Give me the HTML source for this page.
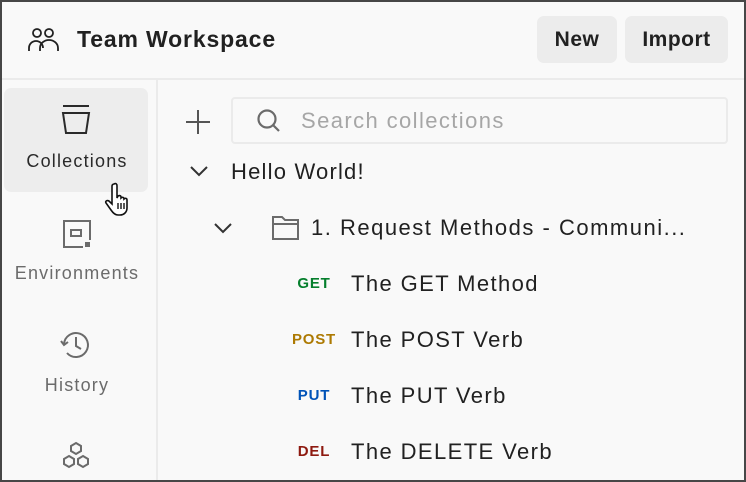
<!DOCTYPE html>
<html><head><style>
*{margin:0;padding:0;box-sizing:border-box}
body{width:746px;height:482px;overflow:hidden;background:#f9f9f9;font-family:"Liberation Sans",sans-serif;color:#212121}
.frame{position:absolute;left:0;top:0;width:746px;height:482px;border:2px solid #474747;border-bottom-width:2px}
.a{position:absolute;white-space:nowrap}
.btn{position:absolute;top:16px;height:47px;background:#ececec;border-radius:7px;font-size:21px;font-weight:bold;line-height:47px;text-align:center;color:#212121;letter-spacing:0.5px}
.side{font-size:18px;color:#6b6b6b;text-align:center;width:150px;left:2px;letter-spacing:1.2px}
.m{font-size:15px;font-weight:bold;text-align:center;width:60px;left:284px;letter-spacing:0.8px}
.t{font-size:22px;left:351px;color:#212121;letter-spacing:1.4px}
</style></head><body>
<div class="a" style="left:2px;top:78px;width:742px;height:2px;background:#ebebeb"></div>
<div class="a" style="left:156px;top:80px;width:2px;height:400px;background:#ebebeb"></div>

<svg class="a" style="left:27px;top:27px" width="34" height="26" viewBox="0 0 34 26" fill="none" stroke="#212121" stroke-width="1.8">
<circle cx="10" cy="6" r="4"/><circle cx="22" cy="6" r="4"/>
<path d="M2 24v-3a7 7 0 0 1 14 0"/><path d="M13 24v-3a9 8 0 0 1 18 0v3"/></svg>
<div class="a" style="left:77px;top:26px;font-size:23px;font-weight:bold;letter-spacing:0.85px">Team Workspace</div>
<div class="btn" style="left:537px;width:80px">New</div>
<div class="btn" style="left:625px;width:103px">Import</div>

<div class="a" style="left:4px;top:88px;width:144px;height:104px;background:#ededed;border-radius:7px"></div>
<svg class="a" style="left:60px;top:104px" width="32" height="32" viewBox="0 0 32 32" fill="none" stroke="#2a2a2a" stroke-width="2"><path d="M3 2h26"/><path d="M3 9h26l-3 20H6z"/></svg>
<div class="a side" style="top:151px;color:#2a2a2a">Collections</div>
<svg class="a" style="left:104px;top:181px" width="34" height="36" viewBox="0 0 34 36"><path d="M10 3c2-1 3 0 3 2v12l1-2c2-1 3 0 3 1v1c1-1 3-1 3 1c1-1 3-1 3 1v8c0 4-3 7-7 7h-2c-3 0-5-2-7-5l-5-7c-1-2 1-3 3-2l3 3V5c0-1 1-2 2-2z" fill="#fff" stroke="#111" stroke-width="1.6"/><path d="M14 22v6M17 22v6M20 22v6" stroke="#111" stroke-width="1.4"/></svg>

<svg class="a" style="left:61px;top:218px" width="32" height="32" viewBox="0 0 32 32" fill="none" stroke="#6b6b6b" stroke-width="2"><path d="M22 29H3V3h26v19"/><rect x="10" y="12" width="10" height="6"/><rect x="24" y="24" width="5" height="5" fill="#6b6b6b" stroke="none"/></svg>
<div class="a side" style="top:263px">Environments</div>
<svg class="a" style="left:60px;top:329px" width="32" height="32" viewBox="0 0 32 32" fill="none" stroke="#6b6b6b" stroke-width="2"><path d="M4 15a12 12 0 1 1 3 9"/><path d="M1 12l3 4 4-3"/><path d="M16 8v9l5 3"/></svg>
<div class="a side" style="top:375px">History</div>
<svg class="a" style="left:61px;top:441px" width="30" height="30" viewBox="0 0 30 30" fill="none" stroke="#6b6b6b" stroke-width="2"><path d="M15 2l5 3v5l-5 3-5-3V5z"/><path d="M8 15l5 3v5l-5 3-5-3v-5z"/><path d="M22 15l5 3v5l-5 3-5-3v-5z"/></svg>

<svg class="a" style="left:185px;top:109px" width="26" height="26" viewBox="0 0 26 26" stroke="#555" stroke-width="2"><path d="M13 1v24M1 13h24"/></svg>
<div class="a" style="left:231px;top:97px;width:497px;height:47px;border:2px solid #ebebeb;border-radius:4px"></div>
<svg class="a" style="left:255px;top:107px" width="28" height="28" viewBox="0 0 28 28" fill="none" stroke="#6b6b6b" stroke-width="2.2"><circle cx="12" cy="12" r="8.5"/><path d="M18 18l6 6"/></svg>
<div class="a" style="left:301px;top:108px;font-size:22px;color:#a6a6a6;letter-spacing:1.4px">Search collections</div>

<svg class="a" style="left:189px;top:164px" width="20" height="14" viewBox="0 0 20 14" fill="none" stroke="#333" stroke-width="2"><path d="M2 3l8 8 8-8"/></svg>
<div class="a" style="left:231px;top:159px;font-size:22px;letter-spacing:1.2px">Hello World!</div>
<svg class="a" style="left:213px;top:221px" width="20" height="14" viewBox="0 0 20 14" fill="none" stroke="#333" stroke-width="2"><path d="M2 3l8 8 8-8"/></svg>
<svg class="a" style="left:271px;top:213px" width="30" height="30" viewBox="0 0 30 30" fill="none" stroke="#6b6b6b" stroke-width="2"><path d="M2 4h9l3 3h13v19H2z"/><path d="M2 11h25"/></svg>
<div class="a" style="left:311px;top:215px;font-size:22px;letter-spacing:1.5px">1. Request Methods - Communi...</div>

<div class="a m" style="top:275px;color:#067f2d">GET</div><div class="a t" style="top:271px">The GET Method</div>
<div class="a m" style="top:331px;color:#ad7a03">POST</div><div class="a t" style="top:327px">The POST Verb</div>
<div class="a m" style="top:387px;color:#0053b8">PUT</div><div class="a t" style="top:383px">The PUT Verb</div>
<div class="a m" style="top:443px;color:#8e1a10">DEL</div><div class="a t" style="top:439px">The DELETE Verb</div>
<div class="frame"></div>
</body></html>
